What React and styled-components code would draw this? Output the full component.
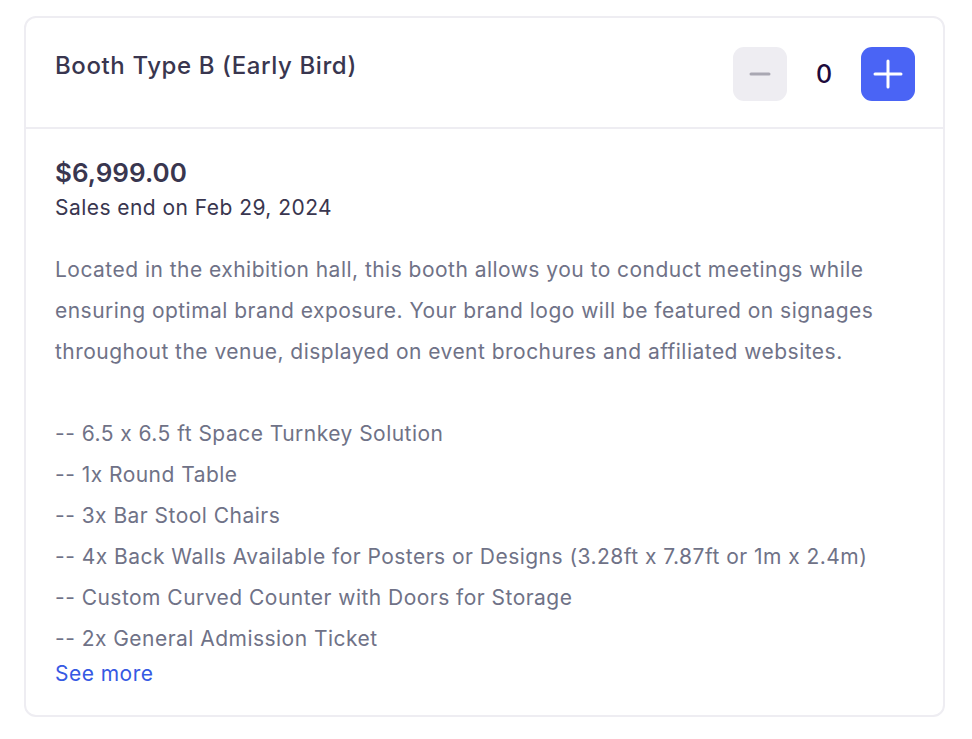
import React, { useState } from 'react';
import styled, { createGlobalStyle } from 'styled-components';

const GlobalStyle = createGlobalStyle`
	html, body {
		margin: 0;
		padding: 0;
		background: #ffffff;
		font-family: Inter, 'Noto Sans', sans-serif;
		font-feature-settings: 'calt' 0;
	}
`;

const Page = styled.div`
	padding: 16px 27px 22px 24px;
`;

const Card = styled.div`
	border: 2px solid #eeedf2;
	border-radius: 12px;
	background: #fff;
	overflow: hidden;
`;

const Header = styled.div`
	display: flex;
	justify-content: space-between;
	align-items: flex-start;
	padding: 29px 28px 26px 29px;
	border-bottom: 2px solid #eeedf2;
`;

const Title = styled.div`
	color: #39364f;
	font-size: 24px;
	font-weight: 500;
	line-height: 38px;
	letter-spacing: 0.6px;
`;

const Stepper = styled.div`
	display: flex;
	align-items: center;
`;

const StepButton = styled.button`
	width: 54px;
	height: 54px;
	border: none;
	border-radius: 11px;
	display: flex;
	align-items: center;
	justify-content: center;
	padding: 0;
	cursor: ${(p) => (p.$disabled ? 'default' : 'pointer')};
	background: ${(p) => (p.$primary ? '#4a64f5' : '#eeedf2')};
	color: ${(p) => (p.$primary ? '#ffffff' : '#a9a8b3')};
`;

const Count = styled.div`
	width: 74px;
	text-align: center;
	color: #1e0a3c;
	font-size: 25px;
	font-weight: 500;
`;

const Body = styled.div`
	padding: 27px 29px 26px 29px;
`;

const Price = styled.div`
	color: #39364f;
	font-size: 26px;
	font-weight: 600;
	line-height: 34px;
`;

const SalesEnd = styled.div`
	color: #39364f;
	font-size: 21px;
	letter-spacing: 0.45px;
	line-height: 36px;
`;

const Description = styled.div`
	margin-top: 23px;
	color: #6f7287;
	font-size: 21px;
	letter-spacing: 0.47px;
	line-height: 41px;
	p {
		margin: 0;
		min-height: 41px;
		white-space: nowrap;
	}
`;

const SeeMore = styled.button`
	display: block;
	border: none;
	background: none;
	padding: 0;
	margin-top: 0;
	color: #3659e3;
	font-family: inherit;
	font-size: 21px;
	letter-spacing: 0.47px;
	line-height: 30px;
	cursor: pointer;
`;

const lines = [
	'Located in the exhibition hall, this booth allows you to conduct meetings while',
	'ensuring optimal brand exposure. Your brand logo will be featured on signages',
	'throughout the venue, displayed on event brochures and affiliated websites.',
	'',
	'-- 6.5 x 6.5 ft Space Turnkey Solution',
	'-- 1x Round Table',
	'-- 3x Bar Stool Chairs',
	'-- 4x Back Walls Available for Posters or Designs (3.28ft x 7.87ft or 1m x 2.4m)',
	'-- Custom Curved Counter with Doors for Storage',
	'-- 2x General Admission Ticket',
];

function MinusIcon() {
	return (
		<svg width="22" height="22" viewBox="0 0 22 22">
			<path d="M2 11h18" stroke="currentColor" strokeWidth="3" strokeLinecap="round" />
		</svg>
	);
}

function PlusIcon() {
	return (
		<svg width="30" height="30" viewBox="0 0 30 30">
			<path d="M2 15h26M15 2v26" stroke="currentColor" strokeWidth="3" strokeLinecap="round" />
		</svg>
	);
}

export default function App() {
	const [count, setCount] = useState(0);

	return (
		<>
			<GlobalStyle />
			<Page>
				<Card>
					<Header>
						<Title>Booth Type B (Early Bird)</Title>
						<Stepper>
							<StepButton $disabled={count === 0} onClick={() => setCount((c) => Math.max(0, c - 1))}>
								<MinusIcon />
							</StepButton>
							<Count>{count}</Count>
							<StepButton $primary onClick={() => setCount((c) => c + 1)}>
								<PlusIcon />
							</StepButton>
						</Stepper>
					</Header>
					<Body>
						<Price>$6,999.00</Price>
						<SalesEnd>Sales end on Feb 29, 2024</SalesEnd>
						<Description>
							{lines.map((line, i) => (
								<p key={i}>{line}</p>
							))}
						</Description>
						<SeeMore>See more</SeeMore>
					</Body>
				</Card>
			</Page>
		</>
	);
}
